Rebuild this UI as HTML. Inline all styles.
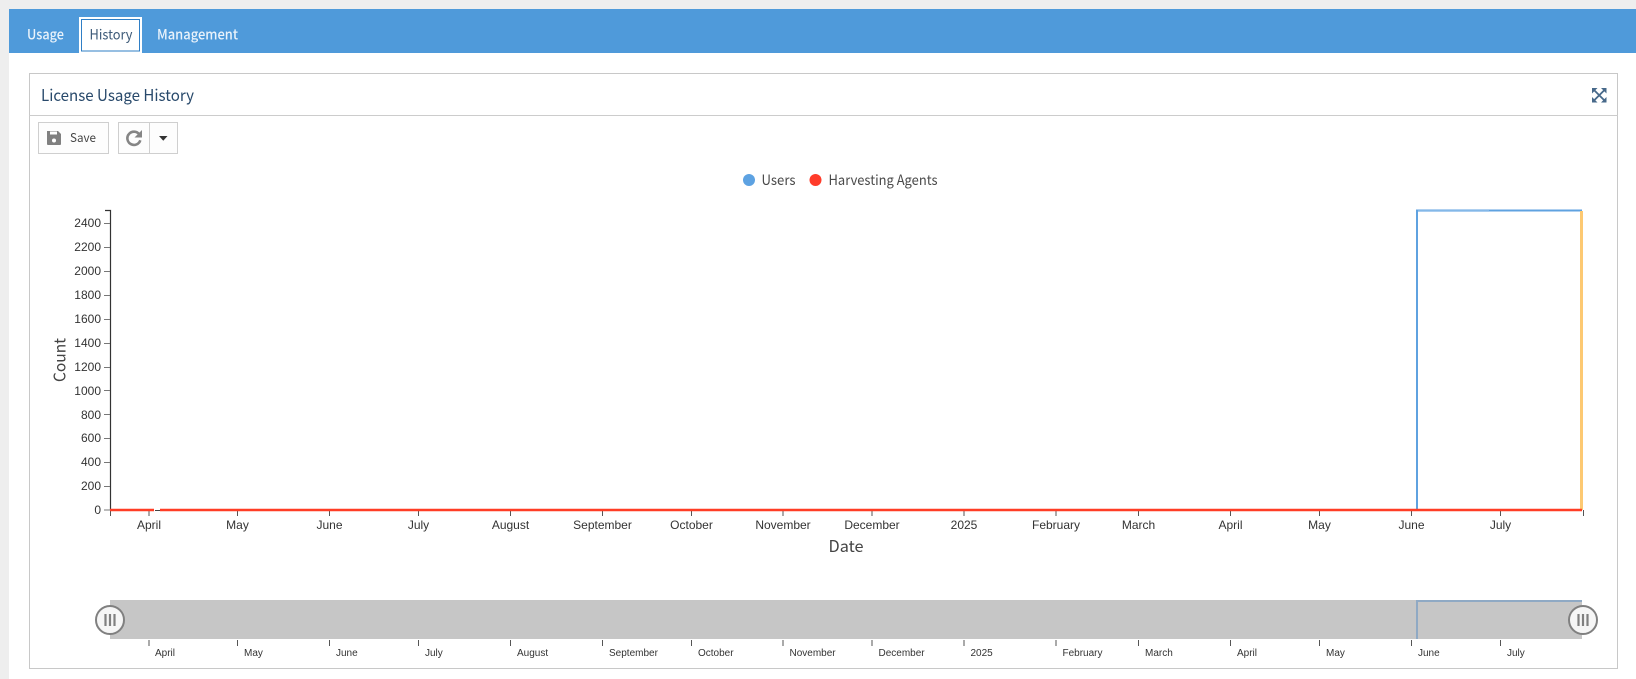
<!DOCTYPE html>
<html><head><meta charset="utf-8"><title>License Usage History</title>
<style>
html,body{margin:0;padding:0;background:#fff;overflow:hidden}
svg{display:block}
.n{font-family:"Noto Sans CJK JP","Liberation Sans",sans-serif}
.a{font-family:"Liberation Sans",Arial,sans-serif;fill:#333}
</style></head><body>
<svg width="1636" height="679" viewBox="0 0 1636 679" xmlns="http://www.w3.org/2000/svg">
<rect width="1636" height="679" fill="#fff"/>
<rect width="1636" height="9" fill="#eeeeee"/>
<rect width="9" height="679" fill="#eeeeee"/>
<rect x="9" y="9" width="1627" height="44" fill="#4f9ada"/>
<!-- tabs -->
<text class="n" x="27" y="39.500" font-size="14" font-weight="500" fill="#eaf3fb" textLength="37" lengthAdjust="spacingAndGlyphs">Usage</text>
<rect x="79" y="17" width="63" height="36" fill="#fff"/>
<rect x="81.500" y="19.500" width="58" height="31.500" fill="#fff" stroke="#2f7fc6" stroke-width="1"/>
<text class="n" x="89.500" y="39.500" font-size="14" fill="#3d5a78" textLength="43" lengthAdjust="spacingAndGlyphs">History</text>
<text class="n" x="157" y="39.500" font-size="14" font-weight="500" fill="#eaf3fb" textLength="81" lengthAdjust="spacingAndGlyphs">Management</text>
<!-- panel -->
<rect x="29.500" y="73.500" width="1588" height="595" fill="#fff" stroke="#c8c8c8"/>
<line x1="29" y1="115.500" x2="1618" y2="115.500" stroke="#cccccc"/>
<text class="n" x="41" y="101" font-size="16" fill="#28496b" textLength="153" lengthAdjust="spacingAndGlyphs">License Usage History</text>
<!-- expand icon -->
<g fill="#47698a" stroke="none">
<path d="M1592 88h5.500l-5.500 5.500z"/>
<path d="M1606.500 88h-5.500l5.500 5.500z"/>
<path d="M1592 102.500h5.500l-5.500-5.500z"/>
<path d="M1606.500 102.500h-5.500l5.500-5.500z"/>
</g>
<path d="M1594 90l10.500 10.500M1604.500 90l-10.500 10.500" stroke="#47698a" stroke-width="1.800" fill="none"/>
<!-- toolbar -->
<rect x="38.500" y="122.500" width="70" height="31" fill="#fdfdfd" stroke="#cfcfcf"/>
<path d="M47 131h11l3 3v10a1 1 0 0 1-1 1H48a1 1 0 0 1-1-1z" fill="#808080"/>
<rect x="50" y="131.500" width="7" height="3" fill="#fff"/>
<circle cx="54" cy="140.500" r="2" fill="#fff"/>
<text class="n" x="70" y="142" font-size="12" fill="#444" textLength="26" lengthAdjust="spacingAndGlyphs">Save</text>
<rect x="118.500" y="122.500" width="59" height="31" fill="#fdfdfd" stroke="#cfcfcf"/>
<line x1="149.500" y1="122" x2="149.500" y2="154" stroke="#cfcfcf"/>
<path d="M139.300 134.400a6.600 6.600 0 1 0 1 5.800" fill="none" stroke="#858585" stroke-width="2.600"/>
<path d="M142 130v7.500h-7.500z" fill="#858585"/>
<path d="M159 136h8.500l-4.250 4.800z" fill="#333"/>
<!-- legend -->
<circle cx="749" cy="180" r="6" fill="#5da2e2"/>
<text class="n" x="761.500" y="185" font-size="14" fill="#4a4a4a" textLength="34" lengthAdjust="spacingAndGlyphs">Users</text>
<circle cx="815.500" cy="180" r="6" fill="#ff3b2a"/>
<text class="n" x="828.500" y="185" font-size="14" fill="#4a4a4a" textLength="109" lengthAdjust="spacingAndGlyphs">Harvesting Agents</text>
<!-- y axis -->
<path d="M105 210.500h5.500V510" fill="none" stroke="#333" stroke-width="1.200"/>
<g stroke="#777" stroke-width="1">
<line x1="104" x2="110" y1="223.500" y2="223.500"/><line x1="104" x2="110" y1="247.500" y2="247.500"/><line x1="104" x2="110" y1="271.500" y2="271.500"/><line x1="104" x2="110" y1="295.500" y2="295.500"/><line x1="104" x2="110" y1="319.500" y2="319.500"/><line x1="104" x2="110" y1="343.500" y2="343.500"/><line x1="104" x2="110" y1="367.500" y2="367.500"/><line x1="104" x2="110" y1="390.500" y2="390.500"/><line x1="104" x2="110" y1="414.500" y2="414.500"/><line x1="104" x2="110" y1="438.500" y2="438.500"/><line x1="104" x2="110" y1="462.500" y2="462.500"/><line x1="104" x2="110" y1="486.500" y2="486.500"/><line x1="104" x2="110" y1="510" y2="510"/>
</g>
<g class="a" font-size="12" text-anchor="end">
<text x="101" y="227">2400</text><text x="101" y="251">2200</text><text x="101" y="275">2000</text><text x="101" y="299">1800</text><text x="101" y="323">1600</text><text x="101" y="347">1400</text><text x="101" y="371">1200</text><text x="101" y="395">1000</text><text x="101" y="419">800</text><text x="101" y="442">600</text><text x="101" y="466">400</text><text x="101" y="490">200</text><text x="101" y="514">0</text>
</g>
<text class="n" transform="translate(65.500,382) rotate(-90)" font-size="16" fill="#444" textLength="44" lengthAdjust="spacingAndGlyphs">Count</text>
<!-- x axis ticks -->
<g stroke="#555" stroke-width="1">
<line x1="110.500" x2="110.500" y1="510" y2="516"/><line x1="1583.500" x2="1583.500" y1="510" y2="516"/>
<line x1="149" x2="149" y1="510" y2="516"/><line x1="237.500" x2="237.500" y1="510" y2="516"/><line x1="329.500" x2="329.500" y1="510" y2="516"/><line x1="418.500" x2="418.500" y1="510" y2="516"/><line x1="510.500" x2="510.500" y1="510" y2="516"/><line x1="602.500" x2="602.500" y1="510" y2="516"/><line x1="691.500" x2="691.500" y1="510" y2="516"/><line x1="783" x2="783" y1="510" y2="516"/><line x1="872" x2="872" y1="510" y2="516"/><line x1="964" x2="964" y1="510" y2="516"/><line x1="1056" x2="1056" y1="510" y2="516"/><line x1="1138.500" x2="1138.500" y1="510" y2="516"/><line x1="1230.500" x2="1230.500" y1="510" y2="516"/><line x1="1319.500" x2="1319.500" y1="510" y2="516"/><line x1="1411.500" x2="1411.500" y1="510" y2="516"/><line x1="1500.500" x2="1500.500" y1="510" y2="516"/>
</g>
<g class="a" font-size="12" text-anchor="middle">
<text x="149" y="529">April</text><text x="237.500" y="529">May</text><text x="329.500" y="529">June</text><text x="418.500" y="529">July</text><text x="510.500" y="529">August</text><text x="602.500" y="529">September</text><text x="691.500" y="529">October</text><text x="783" y="529">November</text><text x="872" y="529">December</text><text x="964" y="529">2025</text><text x="1056" y="529">February</text><text x="1138.500" y="529">March</text><text x="1230.500" y="529">April</text><text x="1319.500" y="529">May</text><text x="1411.500" y="529">June</text><text x="1500.500" y="529">July</text>
</g>
<text class="n" x="846" y="552" font-size="16" fill="#444" text-anchor="middle" textLength="35" lengthAdjust="spacingAndGlyphs">Date</text>
<!-- series -->
<path d="M1417 510V210.500H1582" fill="none" stroke="#5fa2e0" stroke-width="2"/>
<rect x="1418" y="210.500" width="71" height="1.500" fill="#a9cdf0"/>
<rect x="1580" y="211" width="3" height="299" fill="#fdc972"/>
<line x1="110" x2="1582" y1="510" y2="510" stroke="#ff3d25" stroke-width="2.400"/>
<rect x="154" y="508" width="6" height="4" fill="#fff"/>
<line x1="155" x2="160" y1="510.500" y2="510.500" stroke="#444" stroke-width="1"/>
<!-- brush -->
<rect x="110" y="600" width="1472" height="39" fill="#c6c6c6"/>
<path d="M1417 639V601H1582" fill="none" stroke="#8fa9c4" stroke-width="2"/>
<g stroke="#555" stroke-width="1">
<line x1="149" x2="149" y1="640" y2="646"/><line x1="237.500" x2="237.500" y1="640" y2="646"/><line x1="329.500" x2="329.500" y1="640" y2="646"/><line x1="418.500" x2="418.500" y1="640" y2="646"/><line x1="510.500" x2="510.500" y1="640" y2="646"/><line x1="602.500" x2="602.500" y1="640" y2="646"/><line x1="691.500" x2="691.500" y1="640" y2="646"/><line x1="783" x2="783" y1="640" y2="646"/><line x1="872" x2="872" y1="640" y2="646"/><line x1="964" x2="964" y1="640" y2="646"/><line x1="1056" x2="1056" y1="640" y2="646"/><line x1="1138.500" x2="1138.500" y1="640" y2="646"/><line x1="1230.500" x2="1230.500" y1="640" y2="646"/><line x1="1319.500" x2="1319.500" y1="640" y2="646"/><line x1="1411.500" x2="1411.500" y1="640" y2="646"/><line x1="1500.500" x2="1500.500" y1="640" y2="646"/>
</g>
<g class="a" font-size="10">
<text x="155" y="656">April</text><text x="244" y="656">May</text><text x="336" y="656">June</text><text x="425" y="656">July</text><text x="517" y="656">August</text><text x="609" y="656">September</text><text x="698" y="656">October</text><text x="789.500" y="656">November</text><text x="878.500" y="656">December</text><text x="970.500" y="656">2025</text><text x="1062.500" y="656">February</text><text x="1145" y="656">March</text><text x="1237" y="656">April</text><text x="1326" y="656">May</text><text x="1418" y="656">June</text><text x="1507" y="656">July</text>
</g>
<!-- handles -->
<g>
<circle cx="110" cy="620" r="14" fill="#f6f6f6" stroke="#808080" stroke-width="2"/>
<path d="M105.500 614v12M110 614v12M114.500 614v12" stroke="#808080" stroke-width="2.200" fill="none"/>
<circle cx="1583" cy="620" r="14" fill="#f6f6f6" stroke="#808080" stroke-width="2"/>
<path d="M1578.500 614v12M1583 614v12M1587.500 614v12" stroke="#808080" stroke-width="2.200" fill="none"/>
</g>
</svg>
</body></html>
